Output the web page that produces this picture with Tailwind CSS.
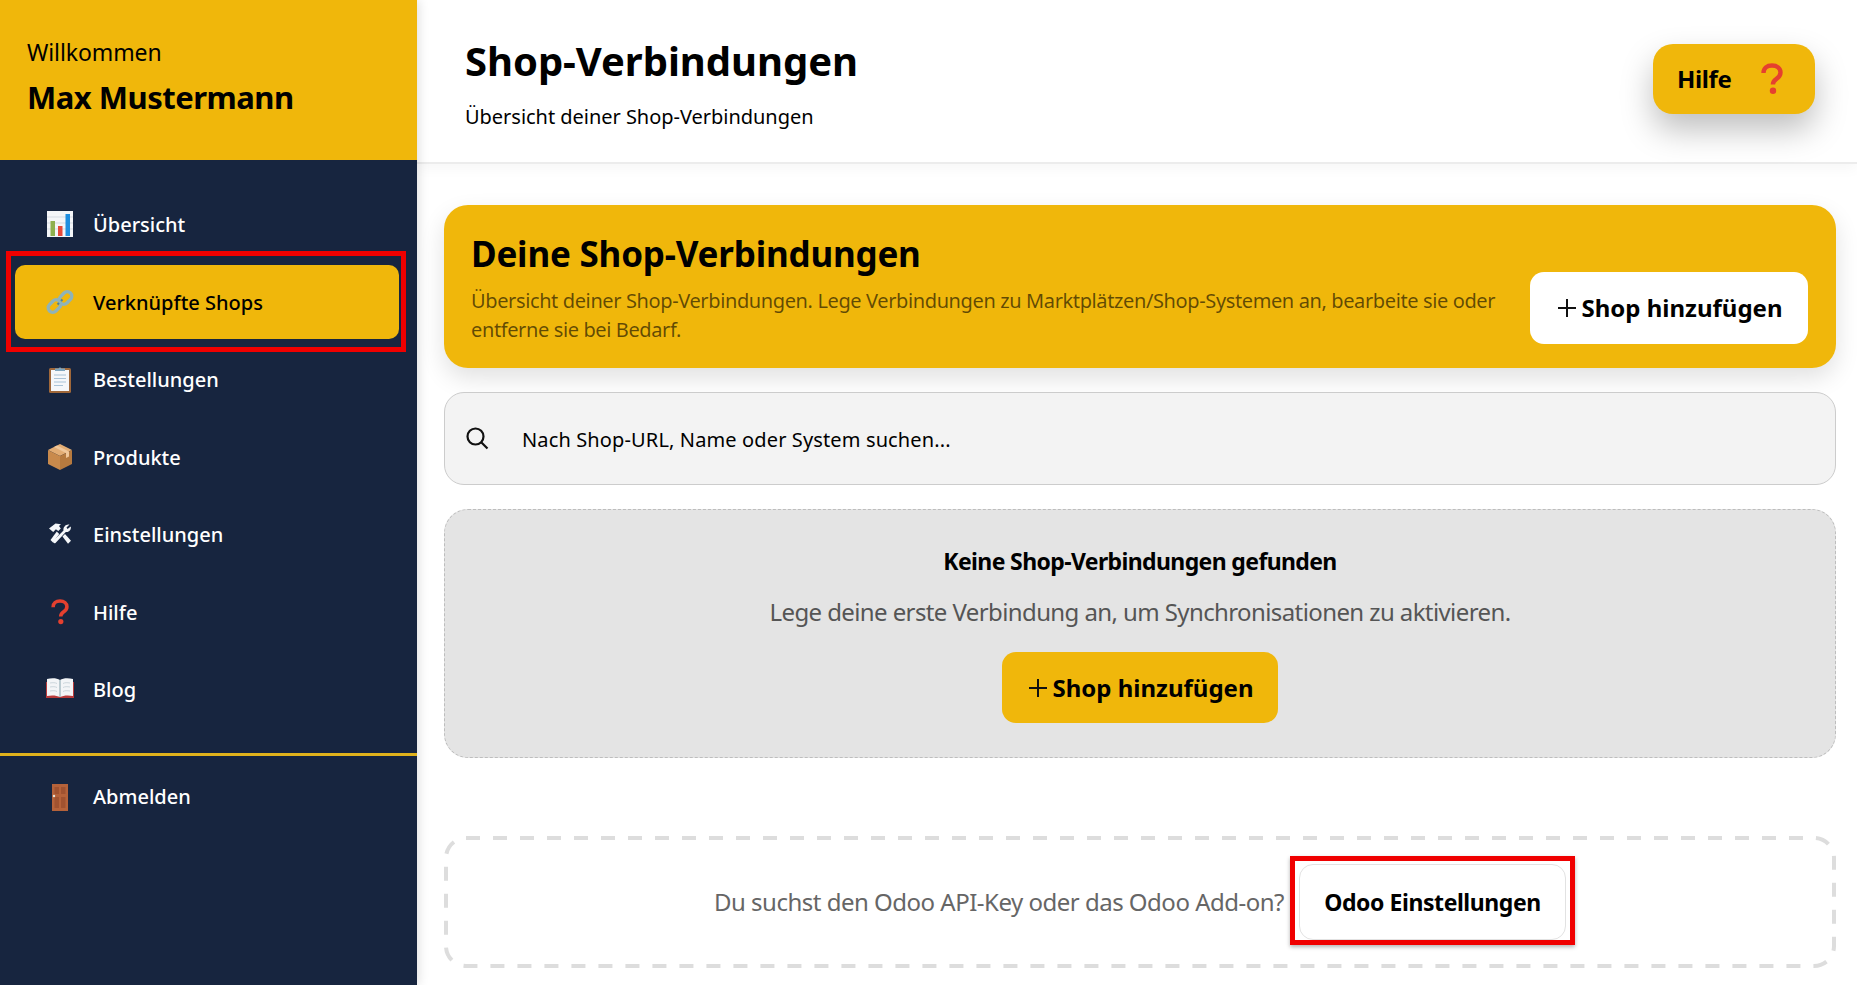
<!DOCTYPE html>
<html lang="de">
<head>
    <meta charset="UTF-8">
    <meta name="viewport" content="width=device-width, initial-scale=1.0">
    <script src="https://cdn.jsdelivr.net/npm/@tailwindcss/browser@4"></script>
    <title>Shop-Verbindungen</title>
</head>
<body class="font-['Noto_Sans','Liberation_Sans',sans-serif] text-black bg-white">
    <svg class="hidden">
        <symbol id="icon-question" viewBox="0 0 24 32">
            <path d="M3.500 10C3.500 5 7 2.500 12 2.500s8.500 2.700 8.500 7c0 3.400-2 5-4.300 6.600-2.200 1.500-3.300 2.800-3.300 5.400" fill="none" stroke="#e5402f" stroke-width="4.400"/>
            <circle cx="13" cy="27.800" r="3.200" fill="#e5402f"/>
        </symbol>
    </svg>
    <div class="flex h-screen overflow-hidden">
        <!-- sidebar -->
        <aside class="w-[417px] shrink-0 flex flex-col bg-[#17253f] shadow-[2px_0_10px_rgba(0,0,0,0.12)] z-20">
            <div class="h-[160px] bg-[#f0b70b] pl-[27px] pt-[35px]">
                <div class="text-[23px] leading-[34px] tracking-[-0.1px]">Willkommen</div>
                <div class="text-[31px] leading-[42px] mt-[7px] font-bold tracking-[-0.5px]">Max Mustermann</div>
            </div>
            <nav class="flex flex-col gap-[3.5px] pt-[27px] pl-[15px] pr-[18px] text-[20px] font-medium text-white">
                <a class="flex items-center h-[74px] pl-[31px] gap-[19px] rounded-[10px]">
                    <svg class="w-[28px] h-[28px]" viewBox="0 0 28 28"><rect x="1" y="1" width="26" height="26" fill="#f4f6f8"/><path d="M1 7h26M1 13h26M1 19h26" stroke="#d5dbe2" stroke-width="1"/><rect x="4.500" y="11" width="4.500" height="15" fill="#8fb04e"/><rect x="12" y="16" width="4.500" height="10" fill="#e5493a"/><rect x="19.500" y="4" width="4.500" height="22" fill="#1f8fe0"/></svg>
                    <span class="pt-[2px]">Übersicht</span>
                </a>
                <a class="relative flex items-center h-[74px] pl-[31px] gap-[19px] rounded-[10px] bg-[#f0b70b] text-black">
                    <svg class="w-[28px] h-[28px]" viewBox="0 0 28 28" fill="none" stroke="#8fb3b8" stroke-width="3.400"><rect x="1.500" y="13.500" width="14" height="9" rx="4.500" transform="rotate(-45 8.500 18)"/><rect x="12.500" y="5.500" width="14" height="9" rx="4.500" transform="rotate(-45 19.500 10)"/><path d="m11.500 16.500 1.500-1.500M15 13l1.500-1.500" stroke="#4f7f93" stroke-width="2"/></svg>
                    <span class="pt-[2px]">Verknüpfte Shops</span>
                    <div class="absolute -left-[9px] -right-[7px] -top-[14px] -bottom-[13px] border-[5px] border-[#f00000]"></div>
                </a>
                <a class="flex items-center h-[74px] pl-[31px] gap-[19px] rounded-[10px]">
                    <svg class="w-[28px] h-[28px]" viewBox="0 0 28 28"><rect x="3" y="3" width="22" height="25" rx="1.500" fill="#a0683a"/><rect x="5" y="5" width="18" height="21" fill="#f5f7fa"/><path d="M8 10h12M8 13.500h12M8 17h12M8 20.500h9" stroke="#a9c3d8" stroke-width="1.200"/><path d="M9 6V3.500h3.500a1.700 1.700 0 0 1 3 0H19V6z" fill="#7fa6bf"/></svg>
                    <span class="pt-[2px]">Bestellungen</span>
                </a>
                <a class="flex items-center h-[74px] pl-[31px] gap-[19px] rounded-[10px]">
                    <svg class="w-[28px] h-[28px]" viewBox="0 0 28 28"><path d="M14 1 26 7 14 13 2 7z" fill="#e3ad74"/><path d="M2 7 14 13v14L2 21z" fill="#c98a4c"/><path d="M26 7 14 13v14l12-6z" fill="#b67a3f"/><path d="M8 4 20 10v5l3-1.500V8.500L11 2.500z" fill="#f0c79a"/></svg>
                    <span class="pt-[2px]">Produkte</span>
                </a>
                <a class="flex items-center h-[74px] pl-[31px] gap-[19px] rounded-[10px]">
                    <svg class="w-[28px] h-[28px]" viewBox="0 0 28 28" fill="#f5f7fa"><path d="M3 8.500 9.500 3.500l5.500.8-2 1.800 1.800 2.400-2.500 2.600-2.400-1.800-2.700 2.700z"/><path d="m10.800 11.500 2.400 2.400L7 22.500l-2.500-2.500z"/><path d="M23.500 4.500 20.500 7.500 21.500 9 24.800 6.500c.6 3-1.500 6-5 5.500L9.500 23c-1.300 1-3-.5-2.200-2.200L17.500 10.500c-.7-3.500 2.500-6.800 6-6z"/><path d="m16.500 16.500 2.500-2.500 6 6.800-3 3z"/></svg>
                    <span class="pt-[2px]">Einstellungen</span>
                </a>
                <a class="flex items-center h-[74px] pl-[31px] gap-[19px] rounded-[10px]">
                    <svg class="w-[28px] h-[26px]"><use href="#icon-question"/></svg>
                    <span class="pt-[2px]">Hilfe</span>
                </a>
                <a class="flex items-center h-[74px] pl-[31px] gap-[19px] rounded-[10px]">
                    <svg class="w-[28px] h-[28px]" viewBox="0 0 28 28"><path d="M0 7v16h28V7z" fill="#b83a3a"/><path d="M1 4c5-1.500 10-1 13 1 3-2 8-2.500 13-1v17c-5-1-10-.5-13 1-3-1.500-8-2-13-1z" fill="#f3f5f7"/><path d="M14 5v17" stroke="#a9bcc5" stroke-width="1.500"/><path d="M4 8c3-.5 5-.5 7 .5M4 12c3-.5 5-.5 7 .5M4 16c3-.5 5-.5 7 .5M17 8.500c2-1 4-1 7-.5M17 12.500c2-1 4-1 7-.5M17 16.500c2-1 4-1 7-.5" stroke="#ccd6dc" fill="none"/></svg>
                    <span class="pt-[2px]">Blog</span>
                </a>
            </nav>
            <div class="mt-[27px] h-[3px] bg-[#e0b21c]"></div>
            <div class="px-[15px] pt-[4px] text-[20px] font-medium text-white">
                <a class="flex items-center h-[74px] pl-[31px] gap-[19px]">
                    <svg class="w-[28px] h-[28px]" viewBox="0 0 28 28"><rect x="6" y="1" width="16" height="27" fill="#b5623a"/><rect x="8.500" y="4" width="4.500" height="7" fill="#a05230"/><rect x="15" y="4" width="4.500" height="7" fill="#a05230"/><rect x="8.500" y="14" width="4.500" height="11" fill="#a05230"/><rect x="15" y="14" width="4.500" height="11" fill="#a05230"/><circle cx="8" cy="13" r="1.200" fill="#e8e2d5"/></svg>
                    <span>Abmelden</span>
                </a>
            </div>
        </aside>

        <div class="flex-1 min-w-0 flex flex-col">
            <!-- page header -->
            <header class="relative z-10 h-[164px] shrink-0 bg-white border-b-2 border-[#ececec] flex items-start justify-between pl-[48px] pr-[42px] shadow-[0_4px_14px_rgba(0,0,0,0.04)]">
                <div class="pt-[33px]">
                    <h1 class="text-[40px] leading-[56px] font-bold tracking-[-0.05px]">Shop-Verbindungen</h1>
                    <p class="text-[20px] leading-[28px] mt-[14px] tracking-[-0.03px]">Übersicht deiner Shop-Verbindungen</p>
                </div>
                <button class="mt-[44px] w-[162px] h-[70px] rounded-[20px] bg-[#f0b70b] flex items-center pl-[24px] gap-[29px] shadow-[0_16px_32px_rgba(0,0,0,0.25)]">
                    <span class="text-[24px] font-bold tracking-[-0.4px]">Hilfe</span>
                    <svg class="w-[24px] h-[32px]"><use href="#icon-question"/></svg>
                </button>
            </header>

            <main class="flex-1 flex flex-col gap-[24px] pt-[41px] pl-[27px] pr-[21px]">
                <section class="h-[163px] rounded-[24px] bg-[#f0b70b] flex items-center justify-between pl-[27px] pr-[28px] shadow-[0_10px_24px_rgba(0,0,0,0.12)]">
                    <div class="w-[1040px] pt-[5px]">
                        <h2 class="text-[35px] leading-[48px] font-bold tracking-[-0.2px] -mt-[4px]">Deine Shop-Verbindungen</h2>
                        <p class="text-[20px] leading-[29px] text-black/60 mt-[8px] tracking-[-0.38px]">Übersicht deiner Shop-Verbindungen. Lege Verbindungen zu Marktplätzen/Shop-Systemen an, bearbeite sie oder entferne sie bei Bedarf.</p>
                    </div>
                    <button class="mt-[43px] w-[278px] h-[72px] rounded-[14px] bg-white flex items-center justify-center gap-[5px] pl-[3px] text-[24px] font-bold">
                        <svg class="w-[18px] h-[18px]" viewBox="0 0 18 18" stroke="#111" stroke-width="2"><path d="M9 0v18M0 9h18"/></svg>
                        <span>Shop hinzufügen</span>
                    </button>
                </section>

                <div class="h-[93px] rounded-[20px] border border-[#cccccc] bg-[#f3f3f3] flex items-center pl-[20px] gap-[33px]">
                    <svg class="w-[24px] h-[24px] -mt-[2px]" viewBox="0 0 24 24" fill="none" stroke="#111" stroke-width="2.200"><circle cx="10.500" cy="10.500" r="8"/><path d="m16.500 16.500 6 6"/></svg>
                    <span class="text-[20px] pt-[2px] tracking-[0.13px]">Nach Shop-URL, Name oder System suchen...</span>
                </div>

                <section class="h-[249px] rounded-[24px] border border-dashed border-[#bdbdbd] bg-[#e4e4e4] flex flex-col items-center pt-[33px]">
                    <h3 class="text-[23px] leading-[36px] font-bold tracking-[-0.62px]">Keine Shop-Verbindungen gefunden</h3>
                    <p class="text-[24px] leading-[36px] text-[#555555] mt-[15px] tracking-[-0.6px]">Lege deine erste Verbindung an, um Synchronisationen zu aktivieren.</p>
                    <button class="mt-[22px] w-[276px] h-[71px] rounded-[14px] bg-[#f0b70b] flex items-center justify-center gap-[5px] pl-[3px] text-[24px] font-bold">
                        <svg class="w-[18px] h-[18px]" viewBox="0 0 18 18" stroke="#111" stroke-width="2"><path d="M9 0v18M0 9h18"/></svg>
                        <span>Shop hinzufügen</span>
                    </button>
                </section>

                <section class="relative mt-[54px] h-[132px] flex items-center justify-center gap-[15px]">
                    <svg class="absolute inset-0 w-full h-full" fill="none"><rect x="2" y="2" width="1388" height="128" rx="20" stroke="#dddddd" stroke-width="4" stroke-dasharray="14 13"/></svg>
                    <span class="text-[24px] text-[#666666] tracking-[-0.5px]">Du suchst den Odoo API-Key oder das Odoo Add-on?</span>
                    <div class="relative">
                        <button class="w-[267px] h-[76px] rounded-[14px] bg-white border border-[#e2e2e2] text-[23px] font-bold tracking-[-0.43px]">Odoo Einstellungen</button>
                        <div class="absolute -left-[9px] -right-[9px] -top-[8px] -bottom-[5px] border-[5px] border-[#f00000] shadow-[0_2px_4px_rgba(0,0,0,0.3)]"></div>
                    </div>
                </section>
            </main>
        </div>
    </div>
</body>
</html>
